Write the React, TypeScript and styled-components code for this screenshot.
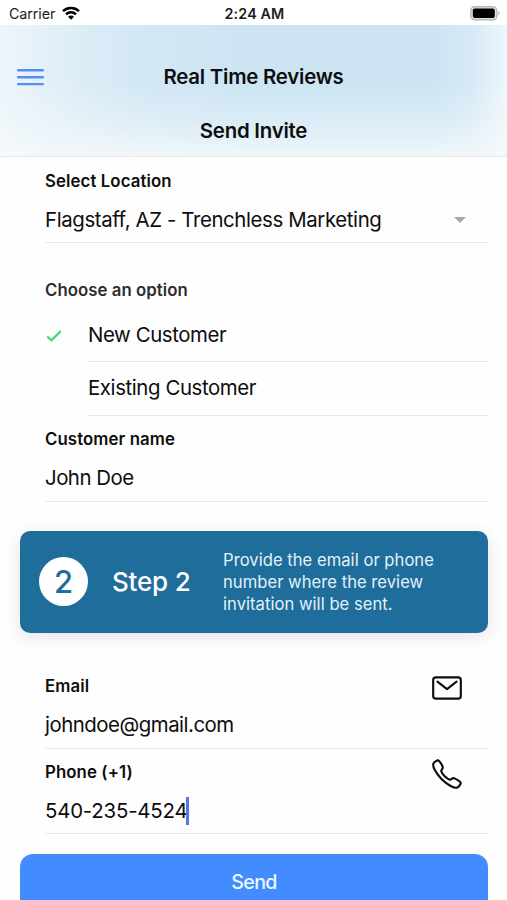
import React from "react";
import styled, { createGlobalStyle } from "styled-components";
import { IoCallOutline, IoMailOutline } from "react-icons/io5";

const GlobalStyle = createGlobalStyle`
  * { box-sizing: border-box; }
  body {
    margin: 0;
    background: #fff;
    color: #0d0d0d;
    font-family: Inter, "Liberation Sans", sans-serif;
    overflow: hidden;
  }
`;

const Screen = styled.div`
  width: 507px;
  height: 900px;
  overflow: hidden;
  background: #fefefe;
`;

const StatusBar = styled.div`
  display: grid;
  grid-template-columns: 1fr auto 1fr;
  align-items: center;
  height: 25px;
  padding: 3px 7px 0 9px;
  font-size: 14.3px;
  line-height: 22px;
  background: #fff;
  color: #1c1c1c;
`;

const Carrier = styled.span`
  display: flex;
  align-items: center;
  gap: 7px;
  letter-spacing: -0.1px;

  svg {
    margin-top: -2px;
  }
`;

const Clock = styled.span`
  font-weight: 600;
  letter-spacing: 0.15px;
`;

const BatterySlot = styled.span`
  display: flex;
  justify-content: flex-end;
  margin-top: -2px;
`;

const Header = styled.header`
  height: 132px;
  border-bottom: 1px solid #e6ebee;
  background:
    linear-gradient(180deg, rgba(247, 250, 252, 0) 45%, rgba(247, 250, 252, 0.35) 75%, rgba(247, 250, 252, 0.8) 100%),
    linear-gradient(270deg, #edf6fb 0, rgba(237, 246, 251, 0.7) 15px, rgba(237, 246, 251, 0.25) 38px, rgba(237, 246, 251, 0) 70px),
    linear-gradient(90deg, #edf5fa 0, rgba(237, 245, 250, 0.72) 40px, rgba(237, 245, 250, 0.42) 90px, rgba(237, 245, 250, 0.15) 150px, rgba(237, 245, 250, 0) 240px),
    #cde5f3;
`;

const Toolbar = styled.div`
  display: grid;
  grid-template-columns: 45px 1fr 45px;
  align-items: center;
  height: 104px;
`;

const MenuButton = styled.button`
  display: flex;
  padding: 0;
  margin: 0 0 0 16px;
  border: 0;
  background: none;
`;

const Title = styled.h1`
  margin: 0;
  font-size: 20.4px;
  font-weight: 600;
  line-height: 24px;
  letter-spacing: -0.22px;
  text-align: center;
`;

const Subtitle = styled(Title).attrs({ as: "h2" })`
  margin-top: -10px;
`;

const Field = styled.div<{ $height: number; $top: number }>`
  display: flex;
  flex-direction: column;
  height: ${(p) => p.$height}px;
  margin: 0 19px 0 45px;
  padding-top: ${(p) => p.$top}px;
  border-bottom: 1px solid #e9e9e9;
`;

const FieldTop = styled.div`
  display: flex;
  align-items: center;
  justify-content: space-between;
  height: 24px;
  padding-right: 24.5px;

  svg {
    margin-top: 4px;
  }
`;

const Label = styled.label`
  font-size: 16.8px;
  font-weight: 600;
  line-height: 24px;
  letter-spacing: 0.1px;
`;

const Value = styled.div<{ $tracking?: number }>`
  display: flex;
  align-items: center;
  height: 44px;
  margin-top: 5px;
  padding-right: 22px;
  font-size: 20.4px;
  line-height: 28px;
  letter-spacing: ${(p) => p.$tracking ?? -0.38}px;
  white-space: nowrap;
`;

const Arrow = styled.i`
  margin-left: auto;
  border: 6px solid transparent;
  border-top-color: #a8a8a8;
  border-bottom: 0;
`;

const Caret = styled.i`
  width: 3px;
  height: 28px;
  margin-left: -1px;
  background: #5577e4;
`;

const GroupTitle = styled.h3`
  margin: 35px 0 7px 45px;
  font-size: 16.8px;
  font-weight: 600;
  line-height: 24px;
  letter-spacing: 0.05px;
  color: #2e2e2e;
`;

const Option = styled.div<{ $height: number }>`
  display: grid;
  grid-template-columns: 43px 1fr;
  align-items: center;
  height: ${(p) => p.$height}px;
  margin: 0 19px 0 45px;
`;

const OptionText = styled.span`
  grid-column: 2;
  display: flex;
  align-items: center;
  height: 100%;
  padding-bottom: 2px;
  border-bottom: 1px solid #e9e9e9;
  font-size: 20.4px;
  letter-spacing: -0.4px;
`;

const StepCard = styled.section`
  display: grid;
  grid-template-columns: 49px 88px 1fr;
  column-gap: 24px;
  align-items: center;
  height: 102px;
  margin: 29px 19px 29px 20px;
  padding: 0 0 1px 19px;
  border-radius: 10px;
  background: #1f6d9a;
  color: #fff;
  box-shadow: 0 4px 18px rgba(0, 0, 0, 0.11);
`;

const StepNumber = styled.span`
  display: flex;
  align-items: center;
  justify-content: center;
  width: 49px;
  height: 49px;
  border-radius: 50%;
  background: #fff;
  color: #1f6d9a;
  font-size: 31px;
  font-weight: 500;
  line-height: 36px;
`;

const StepTitle = styled.strong`
  font-size: 26px;
  font-weight: 500;
  line-height: 32px;
  letter-spacing: -0.2px;
`;

const StepText = styled.p`
  margin: 1px 0 0 -1px;
  font-size: 16.6px;
  line-height: 22px;
  letter-spacing: 0.03px;
  color: #e3f1fa;
`;

const SendButton = styled.button`
  display: block;
  width: 468px;
  height: 60px;
  margin: 20px 0 0 20px;
  padding: 0 0 4px;
  border: 0;
  border-radius: 13px;
  background: #428cff;
  color: #eef6ff;
  font-family: inherit;
  font-size: 19.6px;
  font-weight: 500;
  letter-spacing: -0.7px;
`;

const MenuIcon = () => (
  <svg width="30" height="20" viewBox="0 0 30 20" stroke="#568ff3" strokeWidth="2.5" strokeLinecap="round">
    <path d="M2.2 3h25.6M2.2 10.2h25.6M2.2 17.4h25.6" />
  </svg>
);

const WifiIcon = () => (
  <svg width="18" height="14" viewBox="0 0 18 14" fill="none" stroke="#000" strokeWidth="2.5">
    <path d="M1 5.1C5.5.9 12.5.9 17 5.1" />
    <path d="M4 8.3c2.8-2.6 7.2-2.6 10 0" />
    <path d="M9 13.7 6 10.8c1.7-1.6 4.3-1.6 6 0z" fill="#000" stroke="none" />
  </svg>
);

const BatteryIcon = () => (
  <svg width="30" height="15" viewBox="0 0 30 15">
    <rect x="0.8" y="0.8" width="26" height="13" rx="3.8" fill="#e2e2e2" stroke="#b8b8b8" strokeWidth="1.4" />
    <rect x="2.8" y="2.6" width="22" height="9.4" rx="2" fill="#000" />
    <path d="M28.4 5.2c1.6.7 1.6 3.5 0 4.2z" fill="#aaa" />
  </svg>
);

const CheckIcon = () => (
  <svg width="18" height="16" viewBox="0 0 18 16" fill="none" stroke="#36dc7c" strokeWidth="2.3">
    <path d="M2.2 8.5 6.4 12.3 15.8 3.2" />
  </svg>
);

export default function App() {
  return (
    <Screen>
      <GlobalStyle />
      <StatusBar>
        <Carrier>Carrier <WifiIcon /></Carrier>
        <Clock>2:24 AM</Clock>
        <BatterySlot><BatteryIcon /></BatterySlot>
      </StatusBar>
      <Header>
        <Toolbar>
          <MenuButton aria-label="Menu"><MenuIcon /></MenuButton>
          <Title>Real Time Reviews</Title>
        </Toolbar>
        <Subtitle>Send Invite</Subtitle>
      </Header>

      <Field $height={86} $top={12}>
        <FieldTop><Label>Select Location</Label></FieldTop>
        <Value>Flagstaff, AZ - Trenchless Marketing<Arrow /></Value>
      </Field>

      <GroupTitle>Choose an option</GroupTitle>
      <Option $height={53}>
        <CheckIcon />
        <OptionText>New Customer</OptionText>
      </Option>
      <Option $height={54}>
        <OptionText>Existing Customer</OptionText>
      </Option>

      <Field $height={86} $top={11}>
        <FieldTop><Label>Customer name</Label></FieldTop>
        <Value $tracking={-0.5}>John Doe</Value>
      </Field>

      <StepCard>
        <StepNumber>2</StepNumber>
        <StepTitle>Step 2</StepTitle>
        <StepText>
          Provide the email or phone<br />
          number where the review<br />
          invitation will be sent.
        </StepText>
      </StepCard>

      <Field $height={87} $top={12}>
        <FieldTop><Label>Email</Label><IoMailOutline size={34} /></FieldTop>
        <Value $tracking={-0.48}>johndoe@gmail.com</Value>
      </Field>
      <Field $height={85} $top={11}>
        <FieldTop><Label>Phone (+1)</Label><IoCallOutline size={34} /></FieldTop>
        <Value $tracking={-0.2}>540-235-4524<Caret /></Value>
      </Field>

      <SendButton>Send</SendButton>
    </Screen>
  );
}
